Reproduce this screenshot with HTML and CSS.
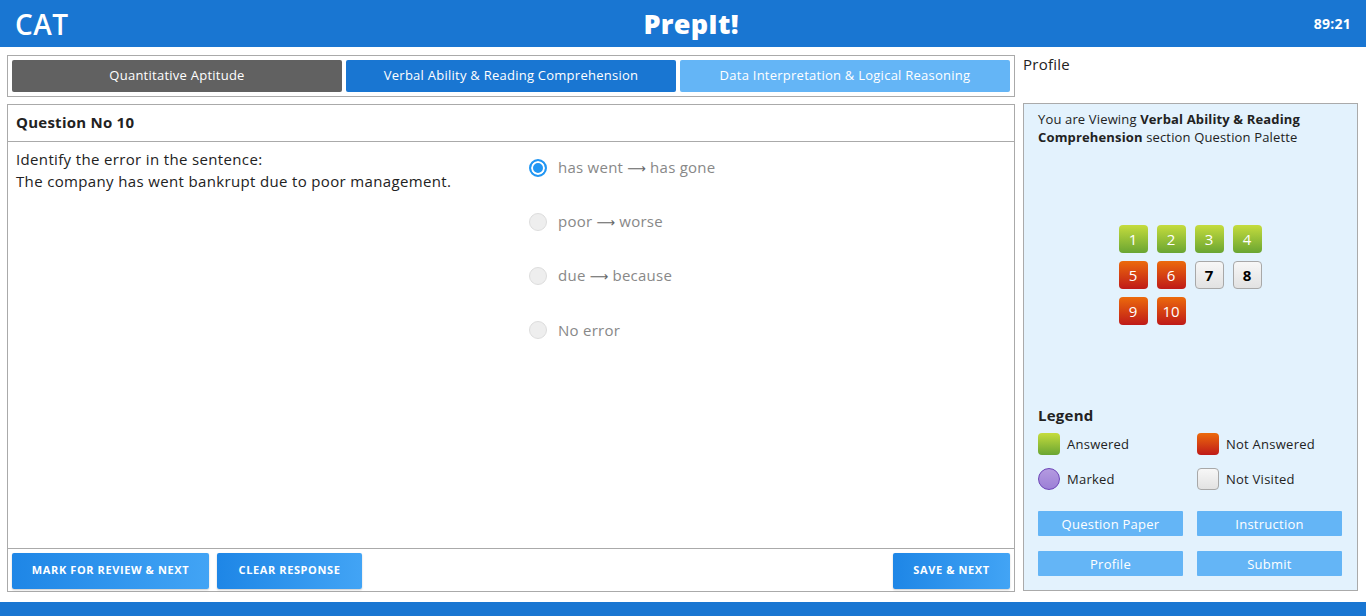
FILE: index.html
```html
<!DOCTYPE html>
<html lang="en">
<head>
<meta charset="utf-8">
<title>PrepIt! - CAT</title>
<link rel="stylesheet" href="styles.css">
</head>
<body>
<header class="topbar">
  <div class="exam-name">CAT</div>
  <div class="brand">PrepIt!</div>
  <div class="timer">89:21</div>
</header>

<main class="layout">
  <section class="left-col">
    <nav class="sections">
      <button class="tab tab-dark">Quantitative Aptitude</button>
      <button class="tab tab-active">Verbal Ability &amp; Reading Comprehension</button>
      <button class="tab tab-light">Data Interpretation &amp; Logical Reasoning</button>
    </nav>

    <div class="question-box">
      <div class="q-header">Question No 10</div>
      <div class="q-body">
        <div class="q-text">
          <p>Identify the error in the sentence:</p>
          <p>The company has went bankrupt due to poor management.</p>
        </div>
        <div class="q-options">
          <label class="option"><span class="radio checked"></span><span>has went <span class="arrow">⟶</span> has gone</span></label>
          <label class="option"><span class="radio"></span><span>poor <span class="arrow">⟶</span> worse</span></label>
          <label class="option"><span class="radio"></span><span>due <span class="arrow">⟶</span> because</span></label>
          <label class="option"><span class="radio"></span><span>No error</span></label>
        </div>
      </div>
      <div class="q-actions">
        <button class="action w-mark">Mark for Review &amp; Next</button>
        <button class="action w-clear">Clear Response</button>
        <span class="spacer"></span>
        <button class="action w-save">Save &amp; Next</button>
      </div>
    </div>
  </section>

  <aside class="right-col">
    <div class="profile-link">Profile</div>
    <div class="panel">
      <p class="viewing">You are Viewing <b>Verbal Ability &amp; Reading Comprehension</b> section Question Palette</p>
      <div class="palette-area">
        <div class="palette">
          <span class="pbtn answered">1</span>
          <span class="pbtn answered">2</span>
          <span class="pbtn answered">3</span>
          <span class="pbtn answered">4</span>
          <span class="pbtn not-answered">5</span>
          <span class="pbtn not-answered">6</span>
          <span class="pbtn not-visited">7</span>
          <span class="pbtn not-visited">8</span>
          <span class="pbtn not-answered">9</span>
          <span class="pbtn not-answered">10</span>
        </div>
      </div>
      <h3 class="legend-title">Legend</h3>
      <div class="legend">
        <div class="legend-item"><span class="lg answered"></span>Answered</div>
        <div class="legend-item"><span class="lg not-answered"></span>Not Answered</div>
        <div class="legend-item"><span class="lg marked"></span>Marked</div>
        <div class="legend-item"><span class="lg not-visited"></span>Not Visited</div>
      </div>
      <div class="panel-buttons">
        <button class="pb">Question Paper</button>
        <button class="pb">Instruction</button>
        <button class="pb">Profile</button>
        <button class="pb">Submit</button>
      </div>
    </div>
  </aside>
</main>

<footer class="footer"></footer>
</body>
</html>
```

FILE: styles.css
```css
* { box-sizing: border-box; }

html, body {
  margin: 0;
  padding: 0;
}

body {
  font-family: "Open Sans", "Noto Sans", sans-serif;
  color: #222;
  background: #fff;
  letter-spacing: 0.25px;
}

button {
  font-family: inherit;
  letter-spacing: inherit;
  border: none;
  cursor: pointer;
}

p { margin: 0; }

.topbar {
  height: 47px;
  background: #1976d2;
  color: #fff;
  display: flex;
  align-items: center;
  justify-content: space-between;
  padding: 0 15px;
}

.exam-name {
  font-size: 28px;
  font-weight: 600;
  letter-spacing: 0.5px;
}

.brand {
  font-size: 27px;
  font-weight: 800;
}

.timer {
  font-size: 14px;
  font-weight: 700;
}

.layout {
  display: flex;
  gap: 8px;
  padding: 8px 8px 10px 7px;
}

.left-col {
  width: 1008px;
  display: flex;
  flex-direction: column;
  gap: 7px;
}

.sections {
  border: 1px solid #aaa;
  height: 42px;
  padding: 4px;
  display: flex;
  gap: 4px;
}

.tab {
  flex: 1;
  height: 32px;
  border-radius: 2px;
  color: #fff;
  font-size: 13px;
  padding: 0 0 2px;
}

.tab-dark { background: #616161; }
.tab-active { background: #1976d2; }
.tab-light { background: #64b5f6; }

.question-box {
  border: 1px solid #aaa;
  height: 488px;
  display: flex;
  flex-direction: column;
}

.q-header {
  height: 37px;
  border-bottom: 1px solid #aaa;
  padding: 0 8px 3px;
  display: flex;
  align-items: center;
  font-weight: 700;
  font-size: 15px;
}

.q-body {
  flex: 1;
  display: flex;
}

.q-text {
  width: 503px;
  padding: 6px 8px;
  font-size: 15px;
  line-height: 22px;
  letter-spacing: 0.35px;
}

.q-options {
  flex: 1;
  padding: 17px 18px;
  display: flex;
  flex-direction: column;
  gap: 36px;
}

.option {
  display: flex;
  align-items: center;
  gap: 11px;
  height: 18px;
  color: #888;
  font-size: 15px;
  line-height: 18px;
}

.option > span:last-child {
  margin-top: -1px;
}

.arrow {
  font-family: "DejaVu Sans", sans-serif;
  font-size: 13px;
  color: #666;
  letter-spacing: 0;
}

.radio {
  width: 18px;
  height: 18px;
  border-radius: 50%;
  background: #eee;
  border: 1px solid #ddd;
}

.radio.checked {
  background: #2196f3;
  border: 2px solid #2196f3;
  box-shadow: inset 0 0 0 2px #fff;
}

.q-actions {
  height: 43px;
  border-top: 1px solid #aaa;
  padding: 4px 4px 3px 4px;
  display: flex;
  gap: 8px;
}

.spacer { flex: 1; }

.action {
  height: 36px;
  border-radius: 2px;
  background: linear-gradient(to right, #1e86e6, #42a4f5);
  color: #fff;
  font-weight: 700;
  font-size: 11px;
  letter-spacing: 0.6px;
  text-transform: uppercase;
  box-shadow: 0 1px 2px rgba(0,0,0,0.2);
  padding: 0 0 3px;
}

.w-mark { width: 197px; }
.w-clear { width: 145px; }
.w-save { width: 117px; }

.right-col {
  width: 335px;
  display: flex;
  flex-direction: column;
}

.profile-link {
  height: 49px;
  font-size: 15px;
  margin-top: -1px;
}

.panel {
  height: 488px;
  background: #e3f2fd;
  border: 1px solid #aaa;
  padding: 6px 15px 14px 14px;
  display: flex;
  flex-direction: column;
}

.viewing {
  font-size: 13px;
  line-height: 18px;
  letter-spacing: 0.15px;
}

.viewing b {
  line-height: 1;
}

.palette-area {
  flex: 1;
  display: flex;
  align-items: center;
  justify-content: center;
}

.palette {
  display: grid;
  grid-template-columns: repeat(4, 29px);
  grid-auto-rows: 28px;
  column-gap: 9px;
  row-gap: 8px;
}

.pbtn {
  display: flex;
  align-items: center;
  justify-content: center;
  border-radius: 4px;
  font-size: 15px;
  color: #fff;
  letter-spacing: 0;
}

.answered { background: linear-gradient(#c5dc3d, #6aa532); }
.not-answered { background: linear-gradient(#ec6a0c, #bf1a18); }
.not-visited {
  background: linear-gradient(#f7f7f7, #e2e2e2);
  border: 1px solid #a8a8a8;
  color: #000;
  font-weight: 700;
}

.legend-title {
  margin: 2px 0 8px;
  font-size: 15px;
  font-weight: 700;
}

.legend {
  display: grid;
  grid-template-columns: 1fr 1fr;
  column-gap: 14px;
  row-gap: 13px;
}

.legend-item {
  display: flex;
  align-items: center;
  gap: 7px;
  font-size: 13px;
  height: 22px;
}

.lg {
  width: 22px;
  height: 22px;
  border-radius: 4px;
}

.lg.marked {
  border-radius: 50%;
  background: linear-gradient(#b49ae0, #9c80d6);
  border: 1px solid #6d45b8;
}

.panel-buttons {
  margin-top: 21px;
  display: grid;
  grid-template-columns: 1fr 1fr;
  column-gap: 14px;
  row-gap: 15px;
}

.pb {
  height: 25px;
  background: #64b5f6;
  color: #fff;
  font-size: 13px;
  border-radius: 1px;
}

.footer {
  height: 40px;
  background: #1976d2;
}
```
